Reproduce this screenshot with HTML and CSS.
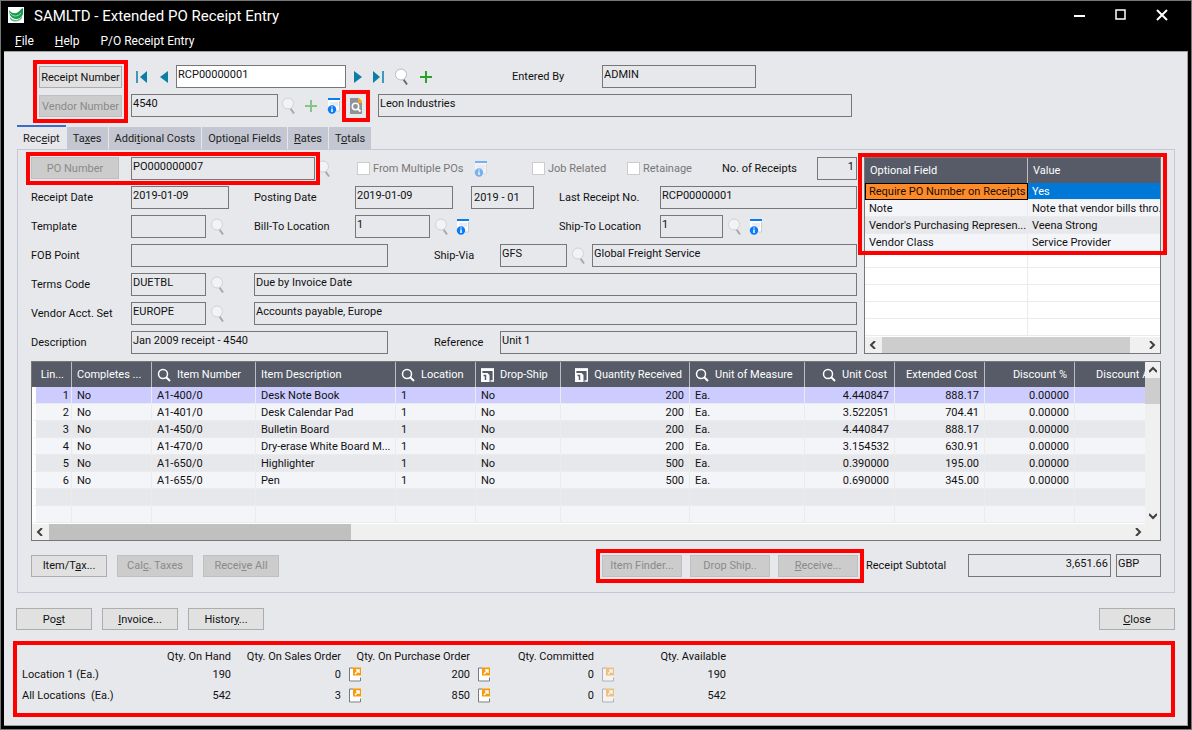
FILE: index.html
```
<!DOCTYPE html>
<html lang="en">
    <head>
        <meta charset="utf-8">
        <title>SAMLTD - Extended PO Receipt Entry</title>
        <link rel="stylesheet" href="styles.css">
    </head>
    <body>
        <svg class="sprite" aria-hidden="true">
            <symbol id="finder" viewBox="0 0 16 18">
                <path d="M9.500 11.500l3.500 5" stroke="#66696e" stroke-width="2" fill="none"/>
                <circle cx="7" cy="6.500" r="5.500" fill="#fff" stroke="#b9bcc3"/>
            </symbol>
            <symbol id="plus" viewBox="0 0 14 14">
                <path d="M6 1v12M0 7h12" stroke="#2ca02c" stroke-width="2"/>
            </symbol>
            <symbol id="info" viewBox="0 0 14 16">
                <path d="M1 0h12v13H1z" fill="#fff"/>
                <path d="M12.500 3v10H9" stroke="#c9ccd2" fill="none"/>
                <path d="M1 0h12v2H1z" fill="#0a7cf5"/>
                <path d="M3 5h8M5 7h6" stroke="#d5d8de"/>
                <circle cx="5" cy="11.500" r="4.200" fill="#0a7cf5"/>
                <path d="M5 10.500v3.500M5 8.500v1" stroke="#fff" stroke-width="1.500"/>
            </symbol>
            <symbol id="doc" viewBox="0 0 14 16">
                <path d="M1 0h8l4 4v12H1z" fill="#8f9299"/>
                <path d="M9 0h1l3 3v2H9z" fill="#f5a81c"/>
                <circle cx="6.500" cy="8.500" r="3.200" fill="#8f9299" stroke="#fff" stroke-width="1.500"/>
                <path d="M8.500 10.500l3 3" stroke="#fff" stroke-width="2"/>
            </symbol>
            <symbol id="lens" viewBox="0 0 14 14">
                <circle cx="6" cy="6" r="4.500" fill="none" stroke="#fff" stroke-width="1.500"/>
                <path d="M9 9l4 4" stroke="#fff" stroke-width="2"/>
            </symbol>
            <symbol id="sheet" viewBox="0 0 13 14">
                <path d="M.700 5V1h11.600v12H9.500" fill="none" stroke="#fff" stroke-width="1.400"/>
                <path d="M0 .500h13V3H0z" fill="#fff"/>
                <path d="M0 5h6.500L8.500 7v7H0z" fill="#fff"/>
                <path d="M2.500 7.500h2V12" stroke="#565b67" stroke-width="1.500" fill="none"/>
            </symbol>
            <symbol id="drill" viewBox="0 0 12 15">
                <path d="M0 1h12v13H0z" fill="#fff"/>
                <path d="M4 .500H.500v13h11V10" fill="none" stroke="#777a80"/>
                <path d="M4 0h8v8H4z" fill="#f79a0b"/>
                <path d="M6 6.500l3.500-3.500M7 2.500h3v3" stroke="#fff" stroke-width="1.500" fill="none"/>
            </symbol>
            <symbol id="first" viewBox="0 0 12 12">
                <path d="M1 0v12" stroke="#0b7fa5" stroke-width="1.500"/><path d="M11 0v12L4 6z" fill="#0b7fa5"/>
            </symbol>
            <symbol id="last" viewBox="0 0 12 12">
                <path d="M11 0v12" stroke="#0b7fa5" stroke-width="1.500"/><path d="M1 0v12l7-6z" fill="#0b7fa5"/>
            </symbol>
            <symbol id="prev" viewBox="0 0 8 12"><path d="M8 0v12L0 6z" fill="#0b7fa5"/></symbol>
            <symbol id="next" viewBox="0 0 8 12"><path d="M0 0v12l8-6z" fill="#0b7fa5"/></symbol>
            <symbol id="left" viewBox="0 0 8 8"><path d="M6 0L2 4l4 4" fill="none" stroke="#404040" stroke-width="2"/></symbol>
            <symbol id="right" viewBox="0 0 8 8"><path d="M2 0l4 4-4 4" fill="none" stroke="#404040" stroke-width="2"/></symbol>
            <symbol id="up" viewBox="0 0 8 8"><path d="M0 6l4-4 4 4" fill="none" stroke="#404040" stroke-width="2"/></symbol>
            <symbol id="down" viewBox="0 0 8 8"><path d="M0 2l4 4 4-4" fill="none" stroke="#404040" stroke-width="2"/></symbol>
        </svg>

        <header class="titlebar">
            <svg class="logo" viewBox="0 0 16 16">
                <path d="M0 0h16v16H0z" fill="#fff"/>
                <path d="M1 3c3 4 8 5 12-1l2-1v6c-2 6-10 7-13 1z" fill="#169c50"/>
                <path d="M2 10c3 4 9 4 12-1v2c-2 4-9 5-12 1z" fill="#67b98b"/>
                <path d="M2 6c3 4 8 4 11 0" fill="none" stroke="#9bdcb4"/>
            </svg>
            <h1>SAMLTD - Extended PO Receipt Entry</h1>
            <div class="window-buttons">
                <button aria-label="Minimize"><svg viewBox="0 0 12 12"><path d="M0 7h11" stroke="#fff" stroke-width="2"/></svg></button>
                <button aria-label="Maximize"><svg viewBox="0 0 12 12"><path d="M1 1h9v9H1z" fill="none" stroke="#fff" stroke-width="1.500"/></svg></button>
                <button aria-label="Close window"><svg viewBox="0 0 12 12"><path d="M1 1l10 10M11 1L1 11" stroke="#fff" stroke-width="2"/></svg></button>
            </div>
        </header>
        <nav class="menubar">
            <a href="#"><u>F</u>ile</a>
            <a href="#"><u>H</u>elp</a>
            <a href="#">P/O Receipt Entry</a>
        </nav>

        <main>
            <section class="top">
                <div class="top-buttons mark">
                    <button class="btn">Receipt Number</button>
                    <button class="btn" disabled>Vendor Number</button>
                </div>
                <div class="top-fields">
                    <div class="top-row receipt-row">
                        <div class="nav-pair before">
                            <button class="icon" aria-label="First"><svg class="i12"><use href="#first"/></svg></button>
                            <button class="icon" aria-label="Previous"><svg class="i8"><use href="#prev"/></svg></button>
                        </div>
                        <input class="field active number" aria-label="Receipt Number" value="RCP00000001">
                        <div class="nav-pair after">
                            <button class="icon" aria-label="Next"><svg class="i8"><use href="#next"/></svg></button>
                            <button class="icon" aria-label="Last"><svg class="i12"><use href="#last"/></svg></button>
                            <button class="icon" aria-label="Find"><svg class="i16"><use href="#finder"/></svg></button>
                            <button class="icon" aria-label="New"><svg class="i14"><use href="#plus"/></svg></button>
                        </div>
                        <label class="entered" for="entered">Entered By</label>
                        <input class="field user" id="entered" value="ADMIN" readonly>
                    </div>
                    <div class="top-row">
                        <input class="field vendor" aria-label="Vendor Number" value="4540" readonly>
                        <div class="nav-pair tools">
                            <button class="icon" disabled aria-label="Find vendor"><svg class="i16"><use href="#finder"/></svg></button>
                            <button class="icon" disabled aria-label="New vendor"><svg class="i14"><use href="#plus"/></svg></button>
                            <button class="icon" aria-label="Vendor information"><svg class="i14 tall"><use href="#info"/></svg></button>
                            <button class="icon mark" aria-label="Vendor inquiry"><svg class="i14 tall"><use href="#doc"/></svg></button>
                        </div>
                        <input class="field vendor-name" aria-label="Vendor name" value="Leon Industries" readonly>
                    </div>
                </div>
            </section>

            <div class="tabs" role="tablist">
                <button role="tab" aria-selected="true">Rec<u>e</u>ipt</button>
                <button role="tab">Ta<u>x</u>es</button>
                <button role="tab">Addi<u>t</u>ional Costs</button>
                <button role="tab">Optio<u>n</u>al Fields</button>
                <button role="tab"><u>R</u>ates</button>
                <button role="tab">T<u>o</u>tals</button>
            </div>

            <section class="panel">
                <div class="details">
                    <form class="form">
                        <div class="row row-po">
                            <div class="po mark">
                                <button class="btn" type="button" disabled>PO Number</button>
                                <input class="field" aria-label="PO Number" value="PO000000007" readonly>
                            </div>
                            <button class="icon" type="button" disabled aria-label="Find PO"><svg class="i16"><use href="#finder"/></svg></button>
                            <label class="check"><input type="checkbox" disabled>From Multiple POs</label>
                            <button class="icon" type="button" disabled aria-label="Multiple POs"><svg class="i14 tall"><use href="#info"/></svg></button>
                            <label class="check"><input type="checkbox" disabled>Job Related</label>
                            <label class="check"><input type="checkbox" disabled>Retainage</label>
                            <label for="count">No. of Receipts</label>
                            <input class="field right" id="count" value="1" readonly>
                        </div>
                        <div class="row row-dates">
                            <label for="rdate">Receipt Date</label>
                            <div><input class="field date" id="rdate" value="2019-01-09" readonly></div>
                            <label for="pdate">Posting Date</label>
                            <div class="period">
                                <input class="field date" id="pdate" value="2019-01-09" readonly>
                                <input class="field" aria-label="Fiscal period" value="2019 - 01" readonly>
                            </div>
                            <label for="lastno">Last Receipt No.</label>
                            <input class="field" id="lastno" value="RCP00000001" readonly>
                        </div>
                        <div class="row row-dates">
                            <label for="template">Template</label>
                            <div class="lookup">
                                <input class="field code" id="template" readonly>
                                <button class="icon" type="button" disabled aria-label="Find template"><svg class="i16"><use href="#finder"/></svg></button>
                            </div>
                            <label for="billto">Bill-To Location</label>
                            <div class="lookup">
                                <input class="field code" id="billto" value="1" readonly>
                                <button class="icon" type="button" disabled aria-label="Find location"><svg class="i16"><use href="#finder"/></svg></button>
                                <button class="icon" type="button" aria-label="Bill-to address"><svg class="i14 tall"><use href="#info"/></svg></button>
                            </div>
                            <label for="shipto">Ship-To Location</label>
                            <div class="lookup">
                                <input class="field short" id="shipto" value="1" readonly>
                                <button class="icon" type="button" disabled aria-label="Find location"><svg class="i16"><use href="#finder"/></svg></button>
                                <button class="icon" type="button" aria-label="Ship-to address"><svg class="i14 tall"><use href="#info"/></svg></button>
                            </div>
                        </div>
                        <div class="row row-ship">
                            <label for="fob">FOB Point</label>
                            <div><input class="field long" id="fob" readonly></div>
                            <label for="via">Ship-Via</label>
                            <div class="lookup">
                                <input class="field via" id="via" value="GFS" readonly>
                                <button class="icon" type="button" disabled aria-label="Find ship-via"><svg class="i16"><use href="#finder"/></svg></button>
                            </div>
                            <input class="field" aria-label="Ship-via name" value="Global Freight Service" readonly>
                        </div>
                        <div class="row row-code">
                            <label for="terms">Terms Code</label>
                            <div class="lookup">
                                <input class="field code" id="terms" value="DUETBL" readonly>
                                <button class="icon" type="button" disabled aria-label="Find terms"><svg class="i16"><use href="#finder"/></svg></button>
                            </div>
                            <input class="field" aria-label="Terms description" value="Due by Invoice Date" readonly>
                        </div>
                        <div class="row row-code">
                            <label for="acct">Vendor Acct. Set</label>
                            <div class="lookup">
                                <input class="field code" id="acct" value="EUROPE" readonly>
                                <button class="icon" type="button" disabled aria-label="Find account set"><svg class="i16"><use href="#finder"/></svg></button>
                            </div>
                            <input class="field" aria-label="Account set description" value="Accounts payable, Europe" readonly>
                        </div>
                        <div class="row row-ref">
                            <label for="desc">Description</label>
                            <div><input class="field long" id="desc" value="Jan 2009 receipt - 4540" readonly></div>
                            <label for="ref">Reference</label>
                            <input class="field" id="ref" value="Unit 1" readonly>
                        </div>
                    </form>

                    <div class="options">
                        <div class="mark">
                            <table class="grid">
                                <thead><tr><th class="w-option">Optional Field</th><th>Value</th></tr></thead>
                                <tbody>
                                    <tr class="current"><td>Require PO Number on Receipts</td><td>Yes</td></tr>
                                    <tr><td>Note</td><td>Note that vendor bills thro..</td></tr>
                                    <tr><td>Vendor's Purchasing Represen...</td><td>Veena Strong</td></tr>
                                    <tr><td>Vendor Class</td><td>Service Provider</td></tr>
                                </tbody>
                            </table>
                        </div>
                        <table class="grid blank">
                            <tr><td class="w-option"></td><td></td></tr>
                            <tr><td></td><td></td></tr>
                            <tr><td></td><td></td></tr>
                            <tr><td></td><td></td></tr>
                            <tr><td></td><td></td></tr>
                        </table>
                        <div class="hscroll">
                            <svg class="arrow"><use href="#left"/></svg>
                            <div class="track"><div class="thumb most"></div></div>
                            <svg class="arrow"><use href="#right"/></svg>
                        </div>
                    </div>
                </div>

                <div class="lines">
                    <div class="lines-body">
                        <div class="lines-view">
                            <table class="grid">
                                <thead>
                                    <tr>
                                        <th class="w-line right">Lin...</th>
                                        <th class="w-80">Completes ...</th>
                                        <th class="w-item"><svg class="i14"><use href="#lens"/></svg>Item Number</th>
                                        <th class="w-desc">Item Description</th>
                                        <th class="w-80"><svg class="i14"><use href="#lens"/></svg>Location</th>
                                        <th class="w-drop"><svg class="i13"><use href="#sheet"/></svg>Drop-Ship</th>
                                        <th class="w-qty right"><svg class="i13"><use href="#sheet"/></svg>Quantity Received</th>
                                        <th class="w-unit"><svg class="i14"><use href="#lens"/></svg>Unit of Measure</th>
                                        <th class="w-90 right"><svg class="i14"><use href="#lens"/></svg>Unit Cost</th>
                                        <th class="w-90 right">Extended Cost</th>
                                        <th class="w-90 right">Discount %</th>
                                        <th class="w-amount right">Discount Amount</th>
                                    </tr>
                                </thead>
                                <tbody>
                                    <tr class="selected"><td>1</td><td>No</td><td>A1-400/0</td><td>Desk Note Book</td><td>1</td><td>No</td><td>200</td><td>Ea.</td><td>4.440847</td><td>888.17</td><td>0.00000</td><td></td></tr>
                                    <tr><td>2</td><td>No</td><td>A1-401/0</td><td>Desk Calendar Pad</td><td>1</td><td>No</td><td>200</td><td>Ea.</td><td>3.522051</td><td>704.41</td><td>0.00000</td><td></td></tr>
                                    <tr><td>3</td><td>No</td><td>A1-450/0</td><td>Bulletin Board</td><td>1</td><td>No</td><td>200</td><td>Ea.</td><td>4.440847</td><td>888.17</td><td>0.00000</td><td></td></tr>
                                    <tr><td>4</td><td>No</td><td>A1-470/0</td><td>Dry-erase White Board M...</td><td>1</td><td>No</td><td>200</td><td>Ea.</td><td>3.154532</td><td>630.91</td><td>0.00000</td><td></td></tr>
                                    <tr><td>5</td><td>No</td><td>A1-650/0</td><td>Highlighter</td><td>1</td><td>No</td><td>500</td><td>Ea.</td><td>0.390000</td><td>195.00</td><td>0.00000</td><td></td></tr>
                                    <tr><td>6</td><td>No</td><td>A1-655/0</td><td>Pen</td><td>1</td><td>No</td><td>500</td><td>Ea.</td><td>0.690000</td><td>345.00</td><td>0.00000</td><td></td></tr>
                                    <tr><td></td><td></td><td></td><td></td><td></td><td></td><td></td><td></td><td></td><td></td><td></td><td></td></tr>
                                    <tr><td></td><td></td><td></td><td></td><td></td><td></td><td></td><td></td><td></td><td></td><td></td><td></td></tr>
                                </tbody>
                            </table>
                        </div>
                        <div class="vscroll">
                            <svg class="arrow"><use href="#up"/></svg>
                            <div class="track"><div class="thumb"></div></div>
                            <svg class="arrow"><use href="#down"/></svg>
                        </div>
                    </div>
                    <div class="hscroll wide">
                        <svg class="arrow"><use href="#left"/></svg>
                        <div class="track"><div class="thumb part"></div></div>
                        <svg class="arrow"><use href="#right"/></svg>
                    </div>
                </div>

                <div class="actions">
                    <div class="buttons">
                        <button class="btn">Item/T<u>a</u>x...</button>
                        <button class="btn" disabled>Cal<u>c</u>. Taxes</button>
                        <button class="btn" disabled>Recei<u>v</u>e All</button>
                    </div>
                    <div class="buttons line-buttons mark">
                        <button class="btn" disabled>Item Finder...</button>
                        <button class="btn" disabled>Drop Ship..</button>
                        <button class="btn" disabled><u>R</u>eceive...</button>
                    </div>
                    <label for="subtotal">Receipt Subtotal</label>
                    <input class="field right subtotal" id="subtotal" value="3,651.66" readonly>
                    <input class="field currency" aria-label="Currency" value="GBP" readonly>
                </div>
            </section>

            <div class="footer">
                <div class="buttons">
                    <button class="btn">Po<u>s</u>t</button>
                    <button class="btn"><u>I</u>nvoice...</button>
                    <button class="btn">Histor<u>y</u>...</button>
                </div>
                <button class="btn"><u>C</u>lose</button>
            </div>

            <section class="quantities">
                <table>
                    <thead>
                        <tr>
                            <td class="q-name"></td>
                            <th class="q-hand">Qty. On Hand</th>
                            <th class="q-sales">Qty. On Sales Order</th>
                            <th colspan="2">Qty. On Purchase Order</th>
                            <th colspan="2">Qty. Committed</th>
                            <th colspan="2">Qty. Available</th>
                        </tr>
                    </thead>
                    <tbody>
                        <tr>
                            <th>Location 1 (Ea.)</th><td>190</td><td>0</td>
                            <td class="q-icon"><button class="icon" aria-label="Sales orders"><svg class="i12 tall"><use href="#drill"/></svg></button></td>
                            <td class="q-po">200</td>
                            <td class="q-icon"><button class="icon" aria-label="Purchase orders"><svg class="i12 tall"><use href="#drill"/></svg></button></td>
                            <td class="q-commit">0</td>
                            <td class="q-icon"><button class="icon" disabled aria-label="Committed"><svg class="i12 tall"><use href="#drill"/></svg></button></td>
                            <td class="q-avail">190</td>
                        </tr>
                        <tr>
                            <th>All Locations&nbsp; (Ea.)</th><td>542</td><td>3</td>
                            <td class="q-icon"><button class="icon" aria-label="All sales orders"><svg class="i12 tall"><use href="#drill"/></svg></button></td>
                            <td>850</td>
                            <td class="q-icon"><button class="icon" aria-label="All purchase orders"><svg class="i12 tall"><use href="#drill"/></svg></button></td>
                            <td>0</td>
                            <td class="q-icon"><button class="icon" disabled aria-label="All committed"><svg class="i12 tall"><use href="#drill"/></svg></button></td>
                            <td>542</td>
                        </tr>
                    </tbody>
                </table>
            </section>
        </main>
    </body>
</html>
```
FILE: styles.css
```
* {
    box-sizing: border-box;
}
body {
    margin: 0;
    min-height: 100vh;
    display: flex;
    flex-direction: column;
    background-color: black;
    border: 1px solid #777;
    padding: 0 3px 3px;
    font-family: Roboto, "Liberation Sans", sans-serif;
    font-size: 11px;
    line-height: 15px;
    color: #111;
}
.sprite {
    display: none;
}
svg {
    display: block;
    flex: none;
}
button, input {
    font: inherit;
    color: inherit;
}

/* title and menu */
.titlebar {
    display: flex;
    align-items: center;
    height: 30px;
    padding: 0 20px 3px 4px;
    color: white;
}
.logo {
    width: 16px;
    height: 16px;
}
h1 {
    flex: 1;
    margin: 3px 0 0 10px;
    font-size: 15px;
    font-weight: normal;
}
.window-buttons {
    display: flex;
    gap: 29px;
}
.window-buttons button {
    padding: 0;
    border: none;
    background: none;
}
.window-buttons svg {
    width: 12px;
    height: 12px;
}
.menubar {
    display: flex;
    gap: 21px;
    height: 20px;
    padding: 2px 11px;
    font-size: 12px;
    line-height: 16px;
}
.menubar a {
    color: white;
    text-decoration: none;
}
main {
    flex: 1;
    padding: 13px 12px 8px 13px;
    background-color: #e7e8ec;
    border: 1px solid #a0a0a0;
    border-left: none;
}

/* shared controls */
.field {
    display: block;
    width: 100%;
    min-width: 0;
    height: 23px;
    padding: 0 2px 4px 1px;
    border: 1px solid #777;
    border-radius: 0;
    background-color: #e7e8ec;
    outline: none;
}
.field.active {
    background-color: white;
}
.right {
    text-align: right;
}
.btn {
    width: 76px;
    height: 22px;
    padding: 0;
    border: 1px solid #adadad;
    background-color: #e1e1e1;
    white-space: nowrap;
}
.btn:disabled {
    border-color: #bfbfbf;
    background-color: #ccc;
    color: #8a8a8a;
}
.icon {
    display: block;
    padding: 0;
    border: none;
    background: none;
}
.icon:disabled {
    opacity: 0.5;
}
.i8 { width: 8px; height: 12px; }
.i12 { width: 12px; height: 12px; }
.i13 { width: 13px; height: 14px; }
.i14 { width: 14px; height: 14px; }
.i16 { width: 16px; height: 18px; }
.tall { height: 16px; }
.mark {
    position: relative;
}
.mark::after {
    content: "";
    position: absolute;
    inset: -5px;
    border: 4px solid red;
    pointer-events: none;
    z-index: 1;
}

/* receipt and vendor */
.top {
    display: flex;
    gap: 9px;
    padding-left: 22px;
}
.top-buttons {
    display: flex;
    flex-direction: column;
    gap: 7px;
    padding-top: 1px;
}
.top-buttons::after {
    inset: -5px -6px -6px;
}
.top-buttons .btn {
    width: 83px;
}
.top-fields {
    flex: 1;
    display: flex;
    flex-direction: column;
    gap: 6px;
}
.top-row {
    display: flex;
    align-items: center;
}
.nav-pair {
    display: flex;
    align-items: center;
    gap: 12px;
}
.before {
    width: 45px;
    padding-left: 5px;
}
.number {
    width: 170px;
}
.after {
    width: 166px;
    padding-left: 8px;
    gap: 10px;
}
.entered {
    width: 90px;
}
.user {
    width: 154px;
}
.vendor {
    width: 147px;
}
.tools {
    width: 100px;
    padding-left: 3px;
    gap: 8px;
}
.tools .mark::after {
    inset: -8px -7px;
}
.vendor-name {
    width: 474px;
}

/* tabs */
.tabs {
    display: flex;
    align-items: flex-end;
    gap: 1px;
    height: 24px;
    margin-top: 8px;
}
.tabs button {
    height: 22px;
    padding: 0 6px;
    border: none;
    background-color: #c4c7d1;
    color: #222;
}
.tabs button[aria-selected] {
    height: 24px;
    border-top: 2px solid #3b6cc9;
    background-color: #e7e8ec;
}
.panel {
    border: 1px solid #c4c7d6;
    padding: 7px 13px 15px;
}
.details {
    display: flex;
    gap: 7px;
}
.form {
    flex: 1;
    display: flex;
    flex-direction: column;
    gap: 6px;
}
.row {
    display: grid;
    align-items: center;
}
.row-po { grid-template-columns: 284px 42px 116px 59px 95px 95px 95px 1fr; }
.row-dates { grid-template-columns: 100px 123px 101px 204px 101px 1fr; }
.row-ship { grid-template-columns: 100px 303px 66px 92px 1fr; }
.row-code { grid-template-columns: 100px 123px 1fr; }
.row-ref { grid-template-columns: 100px 303px 66px 1fr; }
.po {
    display: flex;
    gap: 12px;
}
.po .btn {
    width: 88px;
}
.po .field {
    flex: 1;
}
.row-po > .icon {
    padding-left: 1px;
}
.lookup {
    display: flex;
    align-items: center;
    gap: 4px;
}
.period {
    display: flex;
    gap: 18px;
}
.period .field + .field {
    width: 63px;
    padding: 0 2px;
}
.date { width: 98px; }
.code { width: 75px; }
.short { width: 63px; }
.via { width: 67px; }
.long { width: 257px; }
.lookup .icon + .icon {
    margin-left: 2px;
}
.check {
    display: flex;
    align-items: center;
    gap: 3px;
    color: #777;
    white-space: nowrap;
}
.check input {
    appearance: none;
    width: 13px;
    height: 13px;
    margin: 0;
    border: 1px solid #ccc;
    background-color: white;
}

/* tables */
.grid {
    width: 100%;
    table-layout: fixed;
    border-spacing: 0;
}
.grid th {
    height: 25px;
    padding: 0 5px;
    border-right: 1px solid #b9bcc4;
    background-color: #565b67;
    color: white;
    font-weight: normal;
    text-align: left;
}
.grid th.right {
    padding-right: 7px;
    text-align: right;
}
.grid th svg {
    display: inline-block;
    margin-right: 6px;
    vertical-align: middle;
}
.grid td {
    height: 17px;
    padding: 0 5px;
    border-right: 1px solid #ebebeb;
    border-bottom: 1px solid #ebebeb;
    background-color: #f4f5f9;
}
.grid th, .grid td {
    overflow: hidden;
    white-space: nowrap;
}
.grid tr:nth-child(odd) td {
    background-color: #e7e8ec;
}
.options {
    display: flex;
    flex-direction: column;
    width: 297px;
    border: 1px solid #777;
    background-color: white;
}
.w-option { width: 163px; }
.options .grid tr > :last-child {
    border-right: none;
}
.options .grid td {
    padding: 0 0 0 4px;
}
.options .mark::after {
    inset: -5px -7px -4px;
}
.options .blank tr td {
    background-color: white;
}
.options .grid .current td:first-child {
    padding: 0 0 0 3px;
    border: 1px solid black;
    background-color: #ff8a26;
}
.options .grid .current td:last-child {
    background-color: #0078d7;
    color: white;
}
.lines {
    margin-top: 7px;
    border: 1px solid #777;
    background-color: white;
}
.lines-body {
    display: flex;
    height: 162px;
}
.lines-view {
    flex: 1;
    min-width: 0;
    overflow: hidden;
}
.lines .grid {
    width: 100%;
    min-width: 1157px;
}
.w-line { width: 40px; }
.w-80 { width: 80px; }
.w-90 { width: 90px; }
.w-item { width: 104px; }
.w-desc { width: 140px; }
.w-drop { width: 85px; }
.w-qty { width: 129px; }
.w-unit { width: 115px; }
.lines td:first-child, .lines td:nth-child(7), .lines td:nth-child(n+9) {
    text-align: right;
}
.lines .grid .selected td {
    background-color: #ccf;
}
.lines .grid td:first-child {
    padding-right: 2px;
    border-left: 4px solid white;
}

/* scroll bars */
.hscroll, .vscroll {
    display: flex;
    align-items: center;
    background-color: #f0f0f0;
}
.hscroll {
    height: 16px;
    margin-top: auto;
    padding: 0 4px;
    gap: 5px;
}
.vscroll {
    flex-direction: column;
    width: 15px;
    padding: 4px 0;
    gap: 4px;
}
.hscroll.wide {
    padding-right: 18px;
}
.arrow {
    width: 8px;
    height: 8px;
}
.track {
    flex: 1;
    align-self: stretch;
}
.thumb {
    height: 26px;
    background-color: #cdcdcd;
}
.hscroll .thumb {
    height: 100%;
}
.most { width: 95%; }
.wide .part {
    width: 28%;
    background-color: #c0c0c0;
}

/* buttons under the lines */
.actions {
    display: flex;
    align-items: center;
    margin-top: 13px;
}
.buttons {
    display: flex;
    gap: 10px;
}
.line-buttons {
    gap: 8px;
    margin-left: auto;
    margin-right: 8px;
}
.line-buttons .btn {
    width: 80px;
}
.line-buttons::after {
    inset: -6px;
}
.actions label {
    width: 102px;
}
.subtotal {
    width: 143px;
    margin-right: 5px;
}
.currency {
    width: 45px;
}
.footer {
    display: flex;
    justify-content: space-between;
    margin: 15px 0 11px -1px;
}

/* item quantities */
.quantities {
    margin: 0 0 0 -4px;
    height: 76px;
    padding: 4px 5px;
    border: 4px solid red;
}
.quantities table {
    border-spacing: 0;
}
.quantities th, .quantities td {
    height: 21px;
    padding: 0;
    font-weight: normal;
    text-align: right;
    white-space: nowrap;
}
.quantities thead th, .quantities thead td {
    height: 15px;
}
.quantities tbody th {
    text-align: left;
}
.quantities .q-icon {
    width: 26px;
    padding-left: 8px;
}
.q-name { width: 115px; }
.q-hand { width: 94px; }
.q-sales { width: 110px; }
.q-po { width: 103px; }
.q-commit { width: 98px; }
.q-avail { width: 106px; }
```
